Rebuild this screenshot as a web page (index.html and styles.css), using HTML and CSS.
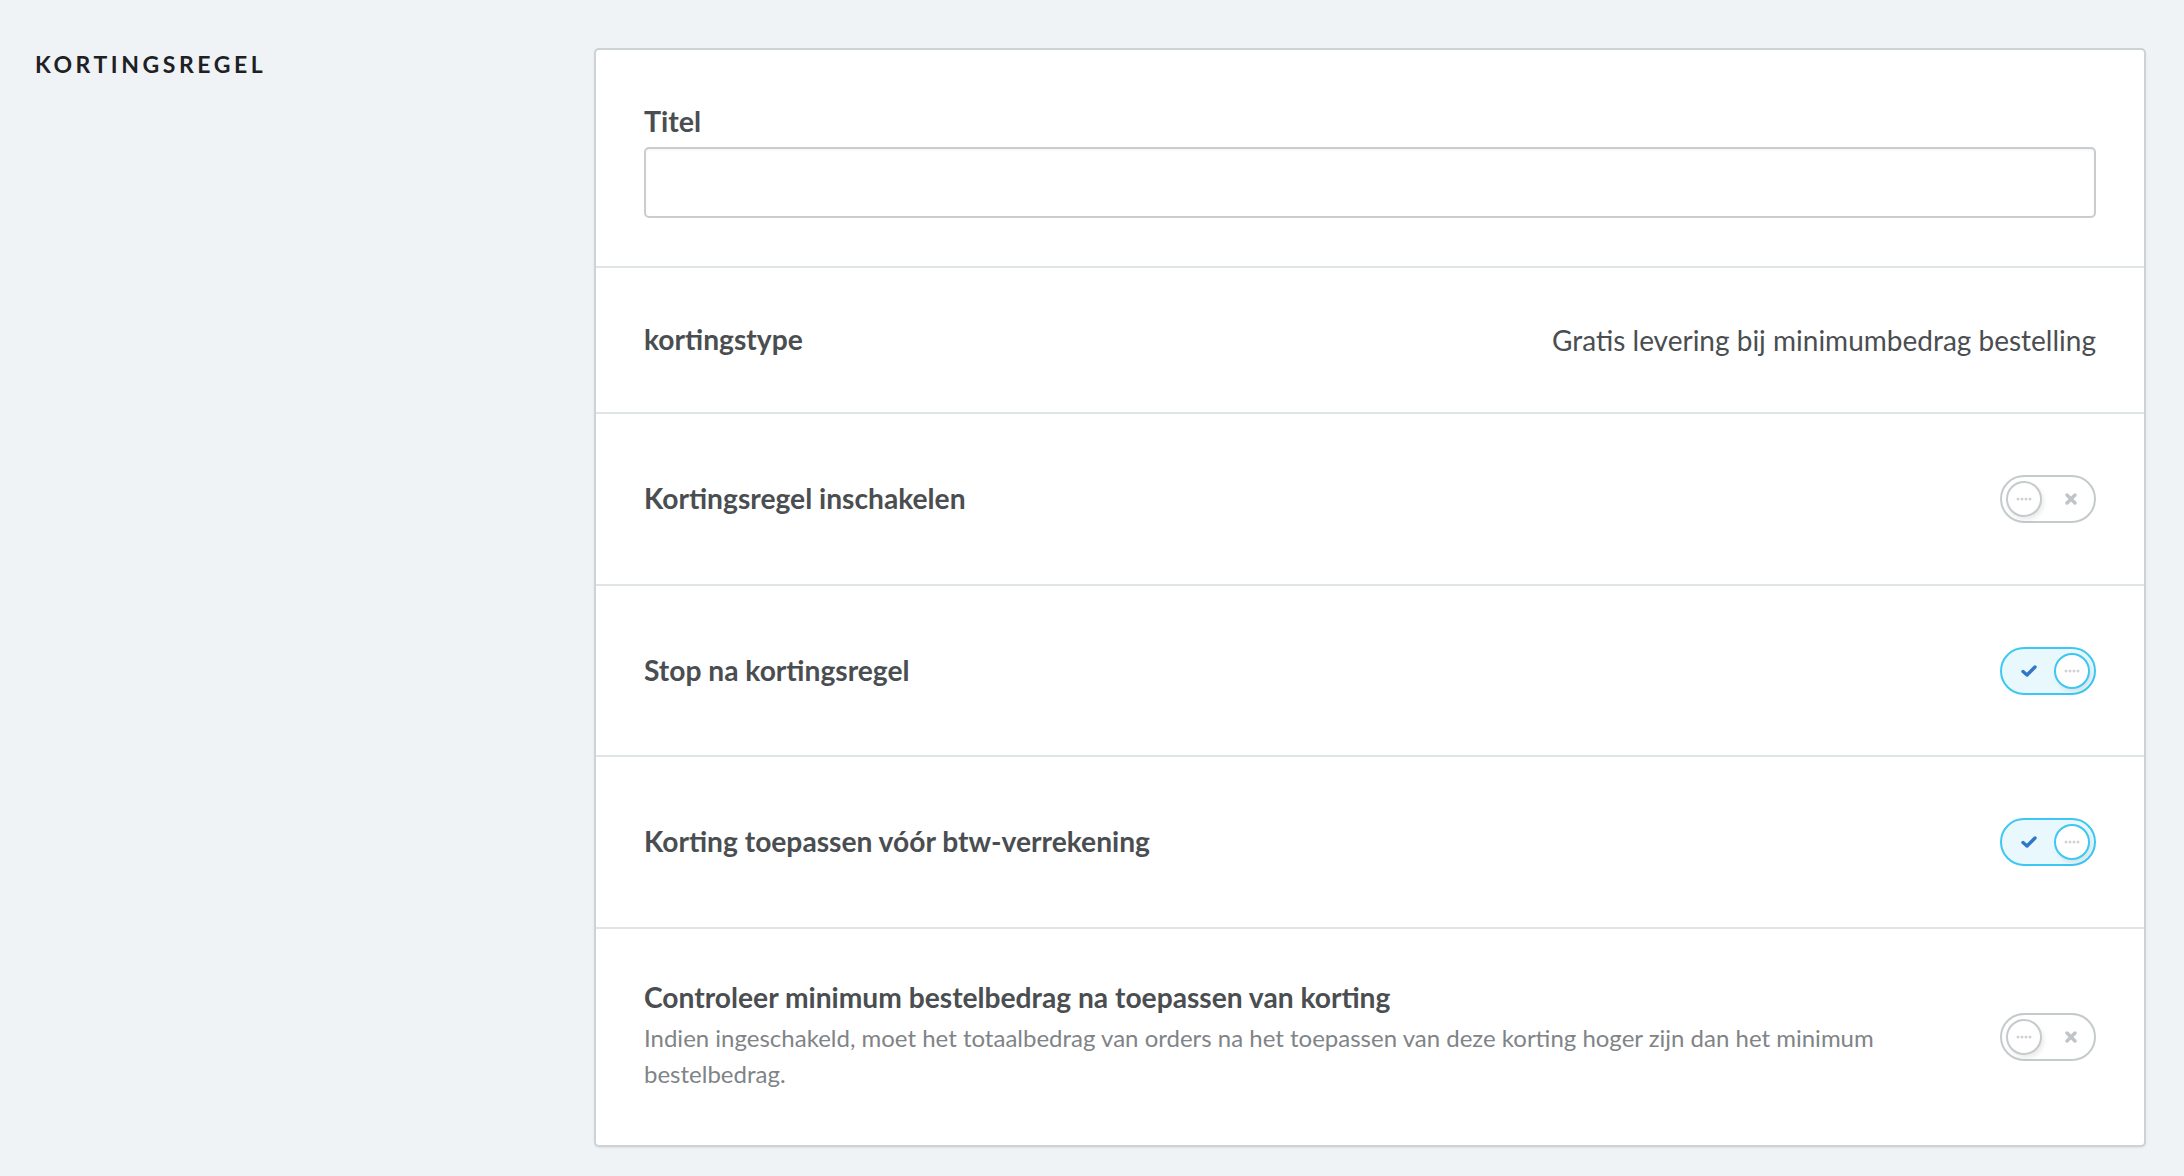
FILE: index.html
```html
<!DOCTYPE html>
<html lang="nl">
<head>
<meta charset="utf-8">
<title>Kortingsregel</title>
<link rel="stylesheet" href="styles.css">
</head>
<body>
<div class="page">
  <aside class="side">
    <h2 class="side-title">KORTINGSREGEL</h2>
  </aside>
  <section class="card">
    <div class="field">
      <label class="label" for="titel">Titel</label>
      <input class="input" id="titel" type="text">
    </div>
    <div class="row row-info">
      <span class="label">kortingstype</span>
      <span class="value">Gratis levering bij minimumbedrag bestelling</span>
    </div>
    <div class="row row-toggle">
      <span class="label">Kortingsregel inschakelen</span>
      <span class="toggle">
        <span class="knob"><svg width="16" height="4" viewBox="0 0 16 4"><circle cx="2" cy="2" r="1.5"/><circle cx="6" cy="2" r="1.5"/><circle cx="10" cy="2" r="1.5"/><circle cx="14" cy="2" r="1.5"/></svg></span>
        <svg class="xmark" width="12" height="12" viewBox="0 0 12 12"><path d="M2 2 L10 10 M10 2 L2 10"/></svg>
      </span>
    </div>
    <div class="row row-toggle">
      <span class="label">Stop na kortingsregel</span>
      <span class="toggle on">
        <svg class="check" width="16" height="12" viewBox="0 0 16 12"><path d="M2 6.5 L6 10 L14 2"/></svg>
        <span class="knob"><svg width="16" height="4" viewBox="0 0 16 4"><circle cx="2" cy="2" r="1.5"/><circle cx="6" cy="2" r="1.5"/><circle cx="10" cy="2" r="1.5"/><circle cx="14" cy="2" r="1.5"/></svg></span>
      </span>
    </div>
    <div class="row row-toggle">
      <span class="label">Korting toepassen vóór btw-verrekening</span>
      <span class="toggle on">
        <svg class="check" width="16" height="12" viewBox="0 0 16 12"><path d="M2 6.5 L6 10 L14 2"/></svg>
        <span class="knob"><svg width="16" height="4" viewBox="0 0 16 4"><circle cx="2" cy="2" r="1.5"/><circle cx="6" cy="2" r="1.5"/><circle cx="10" cy="2" r="1.5"/><circle cx="14" cy="2" r="1.5"/></svg></span>
      </span>
    </div>
    <div class="row row-last">
      <div class="text">
        <span class="label">Controleer minimum bestelbedrag na toepassen van korting</span>
        <p class="desc">Indien ingeschakeld, moet het totaalbedrag van orders na het toepassen van deze korting hoger zijn dan het minimum bestelbedrag.</p>
      </div>
      <span class="toggle">
        <span class="knob"><svg width="16" height="4" viewBox="0 0 16 4"><circle cx="2" cy="2" r="1.5"/><circle cx="6" cy="2" r="1.5"/><circle cx="10" cy="2" r="1.5"/><circle cx="14" cy="2" r="1.5"/></svg></span>
        <svg class="xmark" width="12" height="12" viewBox="0 0 12 12"><path d="M2 2 L10 10 M10 2 L2 10"/></svg>
      </span>
    </div>
  </section>
</div>
</body>
</html>
```
FILE: styles.css
```css
* { box-sizing: border-box; }
html, body { margin: 0; padding: 0; }
body {
  background: #eff3f6;
  font-family: Lato, "Open Sans", sans-serif;
  color: #4a4e51;
}
.page {
  display: flex;
  align-items: flex-start;
  padding: 48px 38px 29px 0;
}
.side {
  width: 594px;
  flex: none;
  padding: 3px 0 0 35px;
}
.side-title {
  margin: 0;
  font-size: 23px;
  font-weight: 700;
  letter-spacing: 3.55px;
  line-height: 1.2;
  color: #1d2124;
}
.card {
  flex: 1;
  background: #fff;
  border: 2px solid #cdd2d4;
  border-radius: 5px;
  box-shadow: 0 1px 2px rgba(0,0,0,0.08);
}
.label {
  font-size: 28.2px;
  font-weight: 700;
  line-height: 1.2;
  color: #4a4e51;
}
.field {
  display: flex;
  flex-direction: column;
  padding: 54px 48px 48px;
  border-bottom: 2px solid #dfe4e6;
}
.field .label { margin-bottom: 9px; font-size: 28.6px; }
.input {
  height: 71px;
  border: 2px solid #c9cdcf;
  border-radius: 5px;
  box-shadow: inset 0 1px 3px rgba(0,0,0,0.05);
  font: inherit;
  outline: none;
}
.row {
  display: flex;
  align-items: center;
  justify-content: space-between;
  padding: 0 48px;
  border-bottom: 2px solid #dfe4e6;
}
.row-info { height: 146px; }
.row-toggle { height: 171.5px; }
.row-last { border-bottom: none; height: 216px; }
.value {
  font-size: 28px;
  color: #4a4e51;
}
.text { display: flex; flex-direction: column; max-width: 1300px; }
.desc {
  margin: 5px 0 0;
  font-size: 24px;
  line-height: 36px;
  color: #808487;
}
.toggle {
  flex: none;
  width: 96px;
  height: 48px;
  border: 2px solid #c5cacc;
  border-radius: 24px;
  background: #fff;
  display: flex;
  align-items: center;
  padding: 0 4px;
}
.toggle .knob {
  width: 36px;
  height: 36px;
  border-radius: 50%;
  border: 2px solid #c5cacc;
  background: #fff;
  box-shadow: 2px 3px 4px rgba(0,0,0,0.08);
  display: flex;
  align-items: center;
  justify-content: center;
}
.knob svg circle { fill: #d0d3d5; }
.xmark { margin-left: 23px; }
.xmark path { stroke: #c0c4c6; stroke-width: 3.4; stroke-linecap: round; fill: none; }
.toggle.on {
  border-color: #3cc8f2;
  background: #e9f8fd;
  justify-content: space-between;
  padding: 0 4px 0 19px;
}
.toggle.on .knob { border-color: #3cc8f2; }
.check path { stroke: #2f78c8; stroke-width: 3.4; stroke-linecap: round; stroke-linejoin: round; fill: none; }
```
